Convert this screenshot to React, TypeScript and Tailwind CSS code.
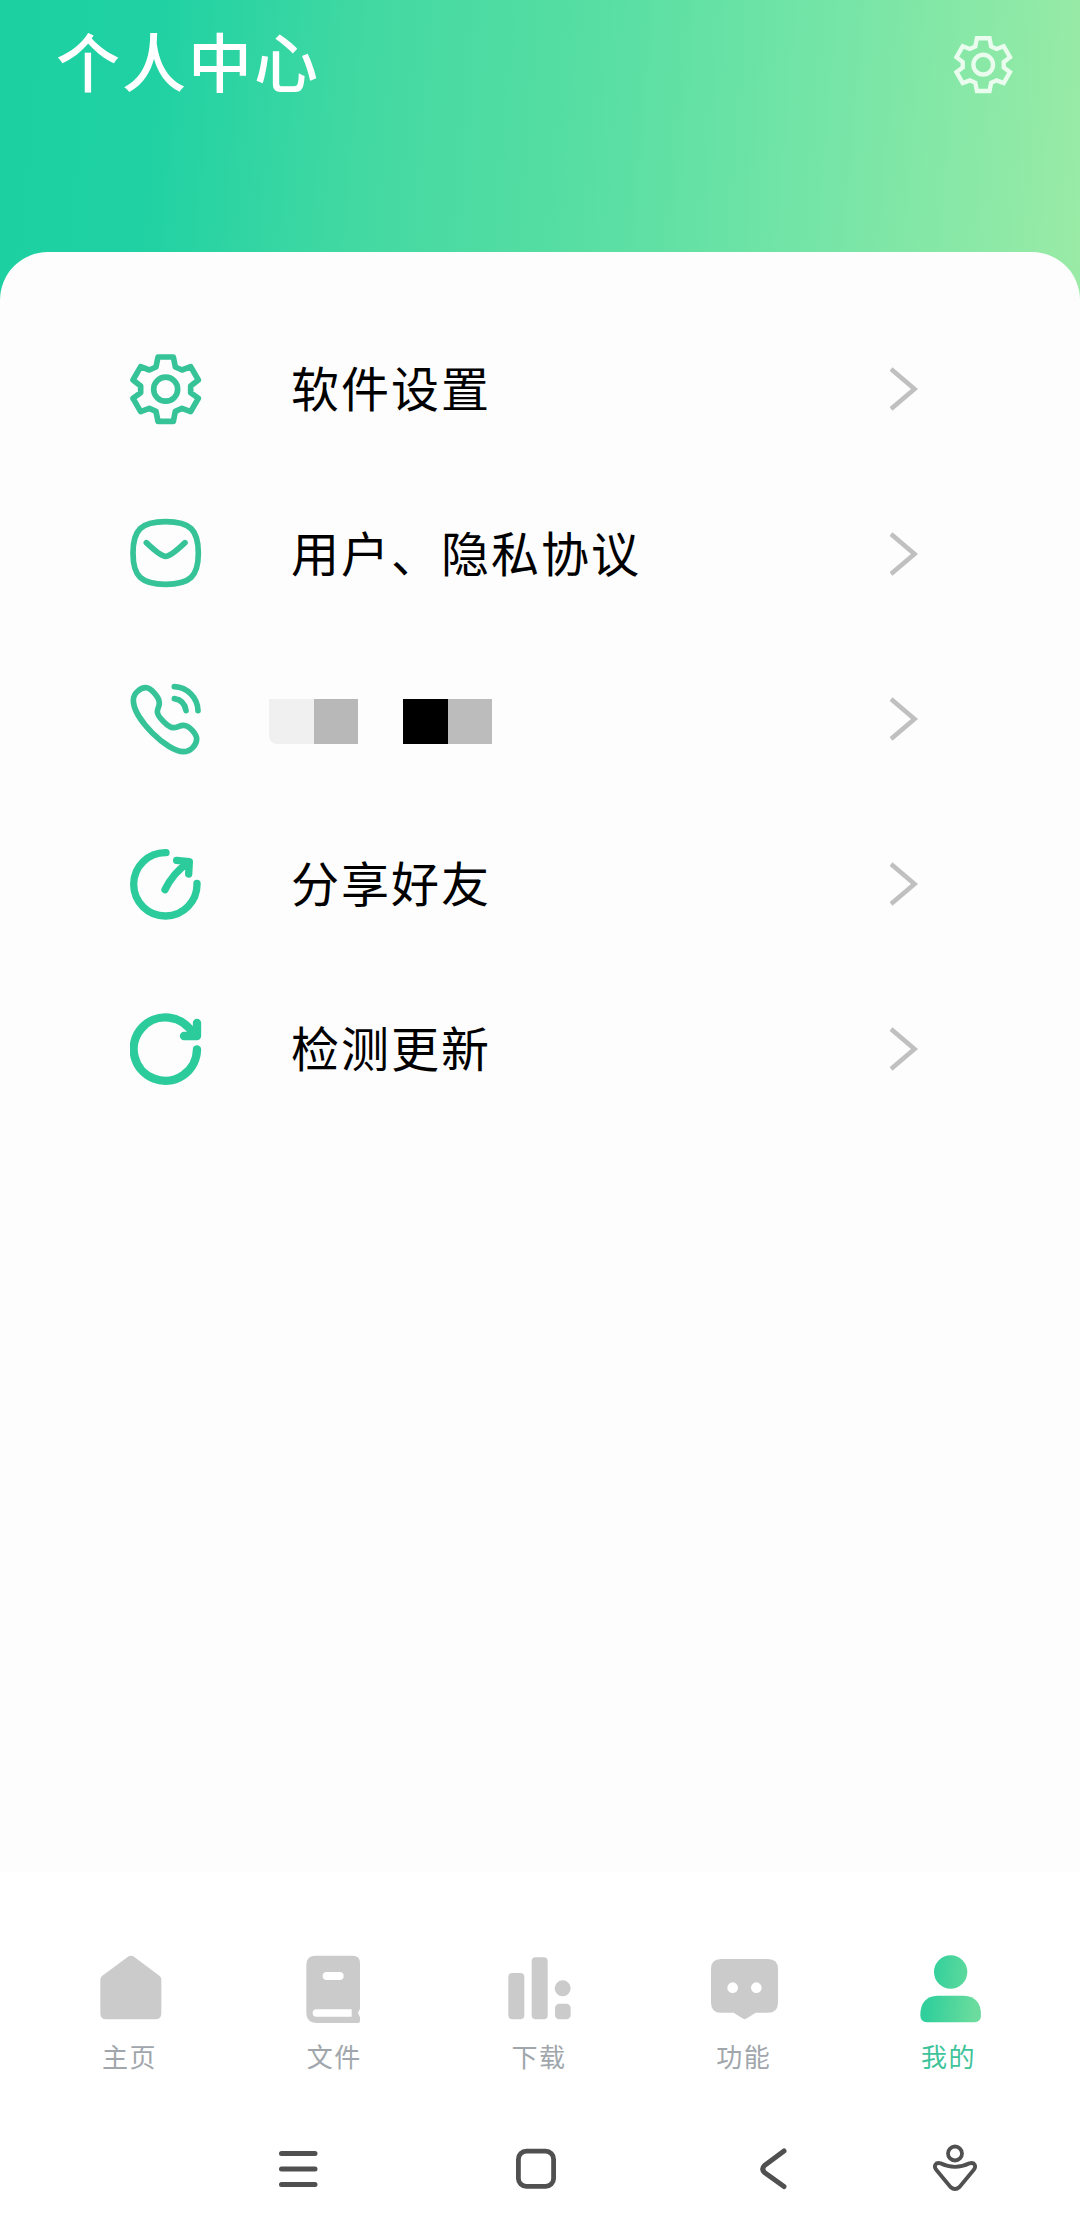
import type { ReactNode } from 'react';

type IconProps = { className?: string };

const GearIcon = ({ className }: IconProps) => (
  <svg viewBox="0 0 216 216" fill="none" stroke="currentColor" className={className}>
    <path d="M84 12H130L136 42L156 51L182 41L205 81L182 99V119L205 136L182 176L156 166L136 175L130 205H84L78 175L58 166L32 176L9 136L32 119V99L9 81L32 41L58 51L78 42Z" />
    <circle cx="107" cy="108.5" r="36" />
  </svg>
);

const MailIcon = () => (
  <svg viewBox="0 0 216 216" fill="none" stroke="currentColor" strokeWidth="17" strokeLinecap="round" className="size-[72px] text-[#35c397]">
    <path d="M107 11C180 11 205 35 205 105S180 199 107 199S9 175 9 105S34 11 107 11Z" />
    <path d="M49 74C75 99 96 115 107 115S139 99 165 74" />
  </svg>
);

const PhoneIcon = () => (
  <svg viewBox="0 0 216 216" fill="none" stroke="currentColor" strokeWidth="17" strokeLinecap="round" className="size-[72px] text-[#35c397]">
    <path d="M47 14C32 14 10 30 10 52C10 108 112 206 160 206C184 206 200 184 200 168C200 154 178 127 161 127C147 127 143 134 130 134C115 134 82 100 82 86C82 76 88 72 88 60C88 44 64 14 47 14Z" />
    <path d="M133 11C172 13 203 44 204 83M133 47C152 50 165 63 168 83" />
  </svg>
);

const ShareIcon = () => (
  <svg viewBox="0 0 216 216" fill="none" stroke="currentColor" strokeWidth="22" strokeLinecap="round" strokeLinejoin="round" className="size-[72px] text-[#2bcb9b]">
    <path d="M108 14A95 95 0 1 0 201 106" />
    <path d="M105 125C119 96 139 68 174 45M140 37L178 41L176 78" />
  </svg>
);

const RefreshIcon = () => (
  <svg viewBox="0 0 216 216" fill="none" stroke="currentColor" strokeWidth="25" strokeLinecap="round" strokeLinejoin="round" className="size-[72px] text-[#2bcb9b]">
    <path d="M201 109A95 95 0 1 1 190 64" />
    <path d="M201 30V69H162" />
  </svg>
);

const ChevronIcon = () => (
  <svg viewBox="0 0 30 46" fill="none" stroke="#c0c0c0" strokeWidth="4.6" className="h-[46px] w-[30px]">
    <path d="M1 3L24.5 23L1 43" />
  </svg>
);

const MaskedNumber = () => (
  <div className="-ml-[22px] mt-[5px] flex h-[45px]">
    <span className="w-[45px] rounded-bl-lg bg-[#f0f0f0]" />
    <span className="w-[44px] bg-[#b8b8b8]" />
    <span className="ml-[45px] w-[45px] bg-black" />
    <span className="w-[44px] bg-[#bcbcbc]" />
  </div>
);

const MenuLabel = ({ children }: { children: ReactNode }) => (
  <span className="mb-1.5 block text-[48px] leading-[72px] tracking-[2px] text-black">{children}</span>
);

const menuItems: { id: string; icon: ReactNode; label: ReactNode }[] = [
  {
    id: 'settings',
    icon: <GearIcon className="size-[72px] text-[#35c397] [stroke-linejoin:round] [stroke-width:17]" />,
    label: <MenuLabel>软件设置</MenuLabel>,
  },
  { id: 'terms', icon: <MailIcon />, label: <MenuLabel>用户、隐私协议</MenuLabel> },
  { id: 'phone', icon: <PhoneIcon />, label: <MaskedNumber /> },
  { id: 'share', icon: <ShareIcon />, label: <MenuLabel>分享好友</MenuLabel> },
  { id: 'update', icon: <RefreshIcon />, label: <MenuLabel>检测更新</MenuLabel> },
];

const tabs: { label: string; active?: boolean; icon: ReactNode }[] = [
  {
    label: '主页',
    icon: <path d="M116 19Q123 15 130 19L208 77Q214 82 214 89V190Q214 208 196 208H49Q31 208 31 190V89Q31 82 37 77Z" />,
  },
  {
    label: '文件',
    icon: (
      <path
        fillRule="evenodd"
        d="M62 17H173Q195 17 195 39V176L189 188L195 202V213Q195 219 189 219H66Q34 219 34 187V45Q34 17 62 17ZM95 66A12 12 0 0 0 95 90H134A12 12 0 0 0 134 66ZM64 178A11 11 0 0 0 64 200H170V178Z"
      />
    ),
  },
  {
    label: '下载',
    icon: (
      <>
        <rect x="25" y="69" width="48" height="139" rx="12" />
        <rect x="95" y="22" width="48" height="186" rx="12" />
        <circle cx="188" cy="115" r="24" />
        <rect x="165" y="161" width="47" height="47" rx="13" />
      </>
    ),
  },
  {
    label: '功能',
    icon: (
      <>
        <path d="M48 27H189Q219 27 219 57V158Q219 188 189 188H152L126 205Q119 210 112 205L86 188H48Q18 188 18 158V57Q18 27 48 27Z" />
        <circle cx="83" cy="113" r="16" fill="#fff" />
        <circle cx="154" cy="113" r="16" fill="#fff" />
      </>
    ),
  },
  {
    label: '我的',
    active: true,
    icon: (
      <>
        <defs>
          <linearGradient id="mine" gradientUnits="userSpaceOnUse" x1="31" y1="0" x2="213" y2="20">
            <stop offset="0.2" stopColor="#30cf9c" />
            <stop offset="1" stopColor="#6bdc9d" />
          </linearGradient>
        </defs>
        <circle cx="122" cy="66" r="50" fill="url(#mine)" />
        <path d="M82 137H162Q213 140 213 195Q213 217 193 217H51Q31 217 31 195Q31 140 82 137Z" fill="url(#mine)" />
      </>
    ),
  },
];

const SystemNav = () => (
  <div className="flex h-[130px] items-center pl-[268px] text-[#505050]">
    <svg viewBox="0 0 60 60" fill="none" stroke="currentColor" strokeWidth="5" strokeLinecap="round" className="size-[60px]">
      <path d="M13.5 14.5H47M13.5 30H47M13.5 45.5H47" />
    </svg>
    <svg viewBox="0 0 60 60" fill="none" stroke="currentColor" strokeWidth="4.8" className="ml-[178px] size-[60px]">
      <rect x="12.4" y="12.2" width="35.2" height="35.2" rx="8" />
    </svg>
    <svg viewBox="0 0 60 60" fill="none" stroke="currentColor" strokeWidth="5" strokeLinecap="round" strokeLinejoin="round" className="ml-[177px] size-[60px]">
      <path d="M41 12L21.5 26.5Q18 30 21.5 33.5L41 47.5" />
    </svg>
    <svg viewBox="0 0 60 60" fill="none" stroke="currentColor" strokeWidth="3.8" strokeLinejoin="round" className="ml-[122px] size-[60px]">
      <circle cx="30" cy="14.5" r="7" />
      <path d="M15.5 24.3Q30 31.5 44.5 24.3C49.5 23 51.5 27 49 30.5L34.5 48Q30 52 25.5 48L11 30.5C8.5 27 10.5 23 15.5 24.3Z" />
    </svg>
  </div>
);

export default function App() {
  return (
    <div className="flex h-[2234px] w-[1080px] flex-col overflow-hidden bg-white font-['Noto_Sans_CJK_SC',sans-serif]">
      <div className="flex h-[1872px] flex-col bg-[linear-gradient(95deg,#1dd0a2_0%,#1fd1a3_14%,#43d9a2_34%,#57dea3_54%,#76e5a7_76%,#9aeba6_100%)] bg-[length:100%_320px] bg-no-repeat">
        {/* Header */}
        <header className="flex h-[252px] items-start justify-between pl-[56px] pr-[67px]">
          <h1 className="pt-[11px] text-[64px] leading-[96px] font-medium tracking-[2px] text-white">个人中心</h1>
          <GearIcon className="mt-[35px] size-[59px] text-[#e9fced] [stroke-width:16]" />
        </header>

        {/* Menu */}
        <main className="flex-1 rounded-t-[48px] bg-[#fdfdfd] pt-[54px]">
          {menuItems.map((item) => (
            <div key={item.id} className="flex h-[165px] items-center pl-[130px] pr-[160px]">
              {item.icon}
              <div className="ml-[89px] flex-1">{item.label}</div>
              <ChevronIcon />
            </div>
          ))}
        </main>
      </div>

      {/* Tab bar */}
      <nav className="grid h-[232px] grid-cols-5 px-7 pt-[78px]">
        {tabs.map((tab) => (
          <div key={tab.label} className={`flex flex-col items-center ${tab.active ? 'text-[#3fc39a]' : 'text-[#a0a6ab]'}`}>
            <svg viewBox="0 0 240 240" fill="#cbcbcb" className="size-20">
              {tab.icon}
            </svg>
            <span className="mt-1.5 mr-0.5 text-[26px] leading-[40px] tracking-[1.5px]">{tab.label}</span>
          </div>
        ))}
      </nav>

      <SystemNav />
    </div>
  );
}
